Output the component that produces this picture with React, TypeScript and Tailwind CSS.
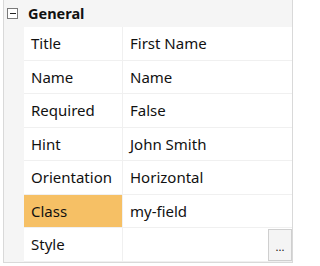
import React from 'react';

const rows: { label: string; value: string; selected?: boolean; button?: boolean }[] = [
  { label: 'Title', value: 'First Name' },
  { label: 'Name', value: 'Name' },
  { label: 'Required', value: 'False' },
  { label: 'Hint', value: 'John Smith' },
  { label: 'Orientation', value: 'Horizontal' },
  { label: 'Class', value: 'my-field', selected: true },
  { label: 'Style', value: '', button: true },
];

export default function App() {
  return (
    <div
      className="w-[297px] h-[266px] bg-white text-[15px] text-[#111] overflow-hidden"
      style={{ fontFamily: '"Segoe UI", "Noto Sans", "Open Sans", sans-serif' }}
    >
      <div className="ml-[3px] mr-[4px] h-[263px] bg-[#f5f5f5] border-l border-r border-b border-[#d9d9d9] flex flex-col">
        {/* Category header */}
        <div className="h-[27px] flex items-center shrink-0">
          <div className="ml-[3px] w-[11px] h-[11px] border border-[#7a7a7a] bg-white flex items-center justify-center">
            <div className="w-[6px] h-px bg-[#222]" />
          </div>
          <span className="ml-[10px] font-bold text-[14.5px] leading-none">General</span>
        </div>

        {/* Property rows */}
        <div className="ml-[20px] flex flex-col">
          {rows.map((r) => (
            <div key={r.label} className="h-[33.5px] flex border-b border-[#f0f0f0] bg-white">
              <div
                className={`w-[99px] shrink-0 flex items-center pl-[7px] border-r border-[#f0f0f0] ${
                  r.selected ? 'bg-[#f6c065]' : ''
                }`}
              >
                {r.label}
              </div>
              <div className="flex-1 flex items-center pl-[7px] relative">
                {r.value}
                {r.button && (
                  <div className="absolute right-0 top-px bottom-0 w-[24px] border border-[#cfcfcf] bg-[#f4f4f4] flex items-end justify-center pb-[8px] text-[11px] leading-none">
                    ...
                  </div>
                )}
              </div>
            </div>
          ))}
        </div>
      </div>
    </div>
  );
}
